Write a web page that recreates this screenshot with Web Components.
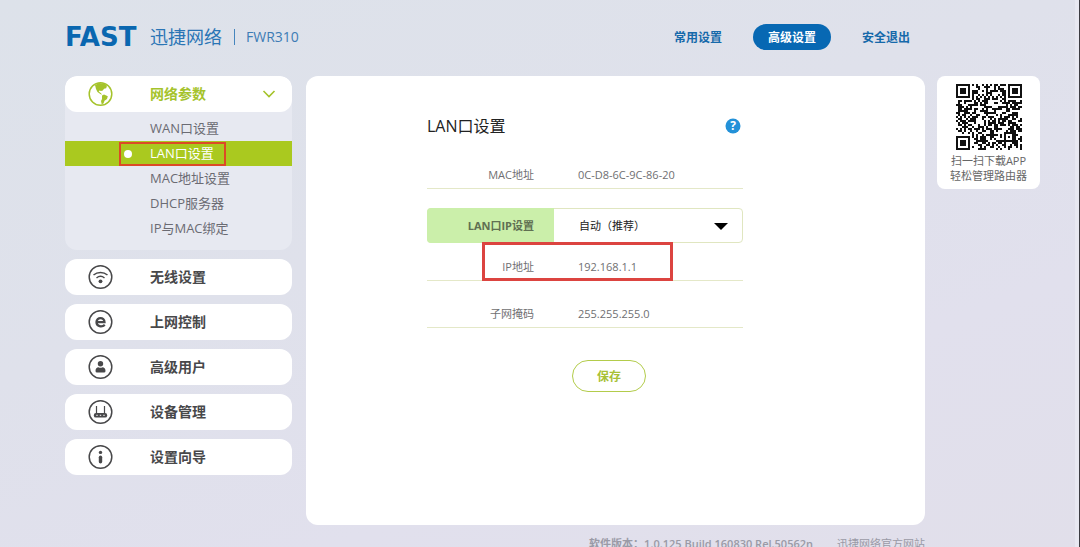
<!DOCTYPE html>
<html lang="zh-CN">
<head>
<meta charset="utf-8">
<meta name="viewport" content="width=device-width, initial-scale=1">
<title>FAST FWR310</title>
<style>
  html { scrollbar-width: none; }
  body {
    margin: 0;
    font-family: "Open Sans", "Noto Sans CJK SC", sans-serif;
    font-size: 12px;
    color: #666;
    background: #e0e0eb;
  }
</style>
</head>
<body>
<router-page>
  <brand-logo slot="brand" model="FWR310"></brand-logo>
  <top-nav slot="nav"></top-nav>
  <side-menu slot="menu"></side-menu>
  <lan-settings slot="content"></lan-settings>
  <app-download slot="aside"></app-download>
  <page-footer slot="footer"></page-footer>
</router-page>

<template id="router-page">
  <style>
    :host {
      display: block;
      min-height: 100vh;
      box-sizing: border-box;
      padding: 24px 39px 8px 65px;
      border-right: 1px solid #3c3c42;
      box-shadow: inset -4px 0 #e8e8f1;
      background: linear-gradient(160deg, #dde2ea 0%, #dfe1eb 40%, #e1e0ed 70%, #e1dfea 100%);
    }
    .grid {
      display: grid;
      grid-template-columns: 229px minmax(0, 1fr) 103px;
      grid-template-areas: "head head ." "menu main aside" "foot foot .";
      column-gap: 12px;
    }
    header { grid-area: head; display: flex; justify-content: space-between; margin-bottom: 26px; }
    .menu { grid-area: menu; padding-right: 2px; }
    main { grid-area: main; }
    aside { grid-area: aside; }
    footer { grid-area: foot; margin-top: 10px; }
  </style>
  <div class="grid">
    <header><slot name="brand"></slot><slot name="nav"></slot></header>
    <div class="menu"><slot name="menu"></slot></div>
    <main><slot name="content"></slot></main>
    <aside><slot name="aside"></slot></aside>
    <footer><slot name="footer"></slot></footer>
  </div>
</template>

<template id="brand-logo">
  <style>
    :host { display: flex; align-items: center; height: 26px; color: #0a67b0; }
    .mark { width: 85px; font: bold 26px/26px "DejaVu Sans", sans-serif; }
    .name { font-size: 18px; line-height: 26px; color: #2a75b5; }
    .model { margin-left: 12px; padding-left: 11px; border-left: 1px solid #4585bd; font-size: 14px; line-height: 16px; color: #3d7cb5; }
  </style>
  <span class="mark">FAST</span><span class="name">迅捷网络</span><span class="model"></span>
</template>

<template id="top-nav">
  <style>
    :host { display: block; }
    nav { display: flex; gap: 16px; }
    a { padding: 1px 15px 0; border-radius: 13px; line-height: 25px; font-size: 12px; font-weight: bold; color: #1669aa; text-decoration: none; }
    a[aria-current] { background: #0768b3; color: #fff; }
  </style>
  <nav>
    <a href="#common">常用设置</a>
    <a href="#advanced" aria-current="page">高级设置</a>
    <a href="#logout">安全退出</a>
  </nav>
</template>

<template id="side-menu">
  <style>
    :host { display: block; }
    nav { display: grid; gap: 9px; }
    ul { list-style: none; margin: 0; padding: 4px 0 9px; }
    .group { border-radius: 12px; background: #e7e9f1; overflow: hidden; }
    li a { display: block; position: relative; padding-left: 85px; line-height: 25px; font-size: 13px; color: #6b6b73; text-decoration: none; }
    li a[aria-current] { background: #aac91f; color: #fff; }
    li a[aria-current]::before { content: ""; position: absolute; left: 59px; top: 9px; width: 8px; height: 8px; border-radius: 50%; background: #fff; }
    .marker { position: absolute; left: 54px; top: 1px; width: 107px; height: 24px; box-sizing: border-box; border: 2px solid #dc4a26; }
  </style>
  <nav>
    <div class="group">
      <menu-card icon="globe" open>网络参数</menu-card>
      <ul>
        <li><a href="#wan">WAN口设置</a></li>
        <li><a href="#lan" aria-current="page">LAN口设置<span class="marker"></span></a></li>
        <li><a href="#mac">MAC地址设置</a></li>
        <li><a href="#dhcp">DHCP服务器</a></li>
        <li><a href="#bind">IP与MAC绑定</a></li>
      </ul>
    </div>
    <menu-card icon="wifi">无线设置</menu-card>
    <menu-card icon="web">上网控制</menu-card>
    <menu-card icon="user">高级用户</menu-card>
    <menu-card icon="router">设备管理</menu-card>
    <menu-card icon="info">设置向导</menu-card>
  </nav>
</template>

<template id="menu-card">
  <style>
    :host { display: block; color: #48484a; }
    :host([open]) { color: #a5c32b; }
    button {
      display: flex; align-items: center; width: 100%; height: 36px;
      padding: 0 16px 0 22px; border: 0; border-radius: 12px;
      background: #fff; color: inherit; font: bold 14px/20px "Open Sans", "Noto Sans CJK SC", sans-serif; text-align: left;
    }
    .icon { flex: none; width: 26px; height: 26px; margin-right: 37px; }
    .label { flex: 1; white-space: nowrap; }
    .chevron { display: none; width: 14px; height: 8px; }
    :host([open]) .chevron { display: block; }
  </style>
  <button type="button">
    <svg class="icon" viewBox="0 0 26 26" fill="none" stroke="currentColor" aria-hidden="true"></svg>
    <span class="label"><slot></slot></span>
    <svg class="chevron" viewBox="0 0 14 8" fill="none" stroke="currentColor" stroke-width="1.6" aria-hidden="true"><path d="M1.5 1 7 6.5 12.5 1"/></svg>
  </button>
</template>

<template id="lan-settings">
  <style>
    :host { display: block; box-sizing: border-box; min-height: 449px; padding: 38px 121px 40px; border-radius: 12px; background: #fff; }
    form { width: 316px; max-width: 100%; }
    header { display: flex; align-items: center; justify-content: space-between; padding-right: 2px; }
    h1 { margin: 0; font-size: 16px; line-height: 24px; font-weight: normal; color: #222; }
    .help { width: 16px; height: 16px; padding: 0; border: 0; background: none; }
    .help svg { display: block; }
    .help text { font: bold 12px "Open Sans", sans-serif; }
    .mac { margin-top: 13px; }
    .mode { display: flex; box-sizing: border-box; height: 35px; margin-top: 19px; border: 1px solid #e0e6c0; border-radius: 4px; position: relative; }
    .mode label { box-sizing: border-box; width: 127px; margin: -1px 0 -1px -1px; padding-right: 20px; border-radius: 4px 0 0 4px; background: #cbefaa; line-height: 35px; text-align: right; font-size: 11px; font-weight: bold; color: #607052; }
    select { flex: 1; padding: 0 0 0 25px; border: 0; background: none; appearance: none; font: 11px "Open Sans", "Noto Sans CJK SC", sans-serif; color: #222; outline: 0; }
    .arrow { position: absolute; right: 14px; top: 14px; width: 14px; height: 7px; pointer-events: none; }
    .ip { position: relative; }
    .marker { position: absolute; left: 55px; top: -1px; width: 191px; height: 39px; box-sizing: border-box; border: 3px solid #dc4440; }
    .mask { margin-top: 9px; }
    .save { display: block; width: 74px; height: 32px; margin: 32px 0 0 145px; padding: 0; border: 1px solid #b3cc4b; border-radius: 16px; background: #fff; color: #a8c136; font: bold 12px "Open Sans", "Noto Sans CJK SC", sans-serif; }
  </style>
  <form>
    <header>
      <h1>LAN口设置</h1>
      <button class="help" type="button" aria-label="帮助">
        <svg width="16" height="16" viewBox="0 0 16 16"><circle cx="8" cy="8" r="7.5" fill="#2391d8"/><text x="8" y="12" text-anchor="middle" fill="#fff">?</text></svg>
      </button>
    </header>
    <info-row class="mac" label="MAC地址">0C-D8-6C-9C-86-20</info-row>
    <div class="mode">
      <label for="mode">LAN口IP设置</label>
      <select id="mode"><option>自动（推荐）</option><option>手动</option></select>
      <svg class="arrow" viewBox="0 0 14 7" aria-hidden="true"><path d="M0 0H14L7 7Z" fill="#000"/></svg>
    </div>
    <div class="ip"><info-row label="IP地址">192.168.1.1</info-row><span class="marker"></span></div>
    <info-row class="mask" label="子网掩码">255.255.255.0</info-row>
    <button class="save" type="button">保存</button>
  </form>
</template>

<template id="info-row">
  <style>
    :host { display: block; padding: 14px 0 3px; border-bottom: 1px solid #e4e8c8; font-size: 11px; line-height: 20px; color: #6f6f72; }
    div { display: grid; grid-template-columns: 107px 1fr; column-gap: 44px; }
    .label { text-align: right; }
  </style>
  <div><span class="label"></span><span><slot></slot></span></div>
</template>

<template id="app-download">
  <style>
    :host { display: block; box-sizing: border-box; padding: 8px 0 6px; border-radius: 8px; background: #fff; text-align: center; font-size: 11px; line-height: 15px; color: #666; }
    svg { display: block; width: 66px; height: 66px; margin: 0 auto 3px; }
    p { margin: 0; }
  </style>
  <svg viewBox="0 0 33 33" shape-rendering="crispEdges" role="img" aria-label="二维码"><path fill="#111"/></svg>
  <p>扫一扫下载APP</p>
  <p>轻松管理路由器</p>
</template>

<template id="page-footer">
  <style>
    :host { display: flex; justify-content: flex-end; gap: 24px; font-size: 11px; line-height: 18px; color: #9a9aa6; }
    span { font-weight: 600; }
    a { color: inherit; text-decoration: none; }
  </style>
  <span>软件版本：1.0.125 Build 160830 Rel.50562n</span>
  <a href="#site">迅捷网络官方网站</a>
</template>

<script>
  class TemplateElement extends HTMLElement {
    constructor() {
      super();
      const template = document.getElementById(this.localName);
      this.attachShadow({ mode: "open" }).append(template.content.cloneNode(true));
    }
  }

  const RING = '<circle cx="13.5" cy="13" r="11.3" stroke-width="1.5"/>';
  const ICONS = {
    globe: RING + '<path fill="currentColor" stroke="none" d="M8 4 12 2l5.500.8 2.500 2-.8 2.400-2.200.6-1.200 1.700-1.800.5-1.500-.6-.8 1.200 2 1.400 1.500 1.500-1.500-.2-3.200-2.300-1.500-3ZM15 14.500l2-1 3.800 1.800-.8 2.700-2.500 1.800-1 2.700-1.800.8-.7-3.300 1-2Z"/>',
    wifi: RING + '<path stroke-width="1.500" d="M6.500 11C10.500 7.500 16.500 7.500 20.500 11M9.500 14C12 11.900 15 11.900 17.500 14"/><circle cx="13.500" cy="17.300" r="1.900" fill="currentColor" stroke="none"/>',
    web: RING + '<path stroke-width="2.300" d="M9.500 13.200H17.500C17.500 7.700 9.500 7.700 9.500 13 9.500 17.800 15 18.300 17.800 15.800"/>',
    user: RING + '<circle cx="13.500" cy="9.800" r="2.700" fill="currentColor" stroke="none"/><path fill="currentColor" stroke="none" d="M8.500 17c0-2.500 1.300-3.700 3-3.700q2 1 4 0c1.700 0 3 1.200 3 3.700q0 1.500-1.500 1.500h-7q-1.500 0-1.500-1.500Z"/>',
    router: RING + '<path stroke-width="1.200" d="M9.500 7V15M17.500 7V15"/><rect x="6.800" y="14" width="13.400" height="4.600" rx="2.200" fill="currentColor" stroke="none"/><path stroke="#fff" d="M9.300 16.300h1.400M12.800 16.300h1.400M16.300 16.300h1.400"/>',
    info: RING + '<circle cx="13.500" cy="8.400" r="1.700" fill="currentColor" stroke="none"/><path stroke-width="3.400" stroke-linecap="round" d="M13.500 13.200V17.800"/>'
  };

  function qrPath() {
    const size = 33;
    let seed = 310, path = "";
    for (let y = 0; y < size; y++) {
      for (let x = 0; x < size; x++) {
        seed = (seed * 1103515245 + 12345) % 2147483648;
        let on = null;
        for (const [cx, cy] of [[3, 3], [29, 3], [3, 29]]) {
          const d = Math.max(Math.abs(x - cx), Math.abs(y - cy));
          if (d <= 4) on = d < 2 || d === 3;
        }
        const align = Math.max(Math.abs(x - 26), Math.abs(y - 26));
        if (align <= 2) on = align !== 1;
        if (on === null && (x === 6 || y === 6)) on = (x + y) % 2 === 0;
        if (on === null) on = (seed >> 16) % 100 < 52;
        if (on) path += `M${x} ${y}h1v1h-1z`;
      }
    }
    return path;
  }

  customElements.define("menu-card", class extends TemplateElement {
    connectedCallback() { this.shadowRoot.querySelector(".icon").innerHTML = ICONS[this.getAttribute("icon")]; }
  });
  customElements.define("info-row", class extends TemplateElement {
    connectedCallback() { this.shadowRoot.querySelector(".label").textContent = this.getAttribute("label"); }
  });
  customElements.define("brand-logo", class extends TemplateElement {
    connectedCallback() { this.shadowRoot.querySelector(".model").textContent = this.getAttribute("model"); }
  });
  customElements.define("app-download", class extends TemplateElement {
    connectedCallback() { this.shadowRoot.querySelector("path").setAttribute("d", qrPath()); }
  });
  for (const name of ["top-nav", "side-menu", "lan-settings", "page-footer", "router-page"]) {
    customElements.define(name, class extends TemplateElement {});
  }
</script>
</body>
</html>
